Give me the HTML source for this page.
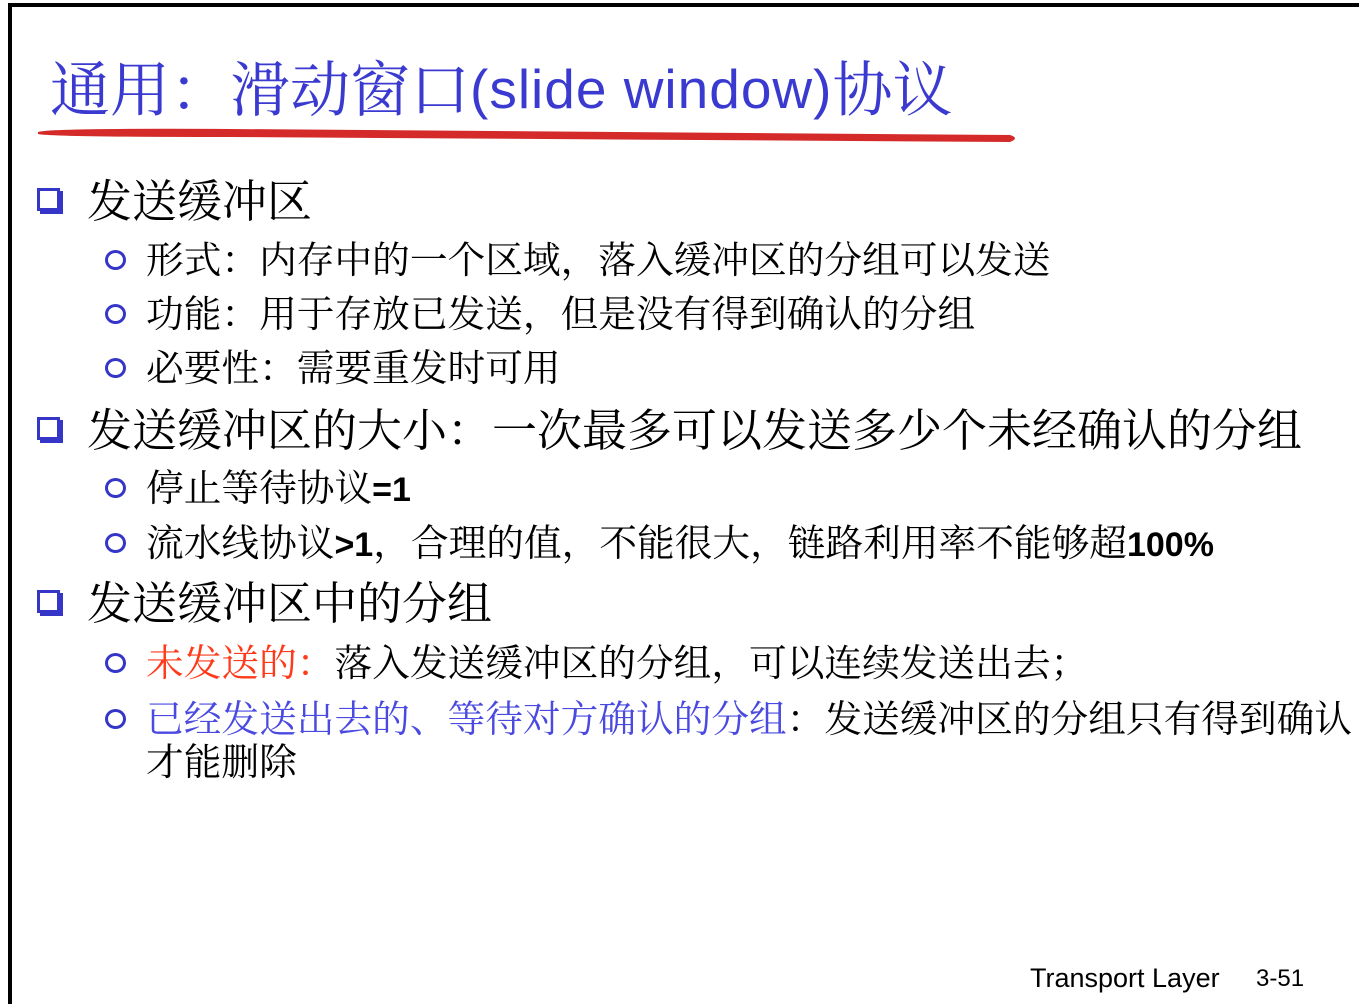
<!DOCTYPE html>
<html><head><meta charset="utf-8"><style>
html,body{margin:0;padding:0;background:#fff;}
body{width:1359px;height:1004px;position:relative;overflow:hidden;font-family:"Noto Serif CJK SC",serif;}
.bt{position:absolute;left:8px;top:3px;width:1351px;height:4px;background:#000;}
.bl{position:absolute;left:8px;top:3px;width:4px;height:1001px;background:#000;}
.t{position:absolute;white-space:nowrap;line-height:1;}
.cjk{font-family:"Noto Serif CJK SC",serif;}
.l1{font-size:45px;left:87px;}
.l2{font-size:37.7px;left:146px;}
.sq{position:absolute;left:37px;width:23px;height:23px;border:3px solid #3535c8;box-sizing:border-box;box-shadow:3px 3px 0 #3535c8;}
.ci{position:absolute;left:105px;width:21px;height:20px;border:3.5px solid #3535c8;border-radius:50%;box-sizing:border-box;}
.lat{font-family:"Liberation Sans",sans-serif;}
</style></head><body>
<div class="bt"></div><div class="bl"></div>
<div class="t cjk" style="left:50px;top:56px;font-size:60px;color:#3a3ad0;">通用：滑动窗口<span class="lat" style="font-size:55px;letter-spacing:1px;position:relative;top:-3px;">(slide window)</span>协议</div>
<svg style="position:absolute;left:30px;top:120px" width="990" height="30"><path d="M8 12 Q20 8 200 9 L980 15 Q990 18 980 22 L200 17 Q20 17 8 14Z" fill="#d42a2a"/></svg>

<div class="sq" style="top:188px"></div>
<div class="t cjk l1" style="top:175px">发送缓冲区</div>
<div class="ci" style="top:250px"></div>
<div class="t cjk l2" style="top:239px">形式：内存中的一个区域，落入缓冲区的分组可以发送</div>
<div class="ci" style="top:304px"></div>
<div class="t cjk l2" style="top:293px">功能：用于存放已发送，但是没有得到确认的分组</div>
<div class="ci" style="top:358px"></div>
<div class="t cjk l2" style="top:347px">必要性：需要重发时可用</div>

<div class="sq" style="top:417px"></div>
<div class="t cjk l1" style="top:404px">发送缓冲区的大小：一次最多可以发送多少个未经确认的分组</div>
<div class="ci" style="top:478px"></div>
<div class="t cjk l2" style="top:467px">停止等待协议<span class="lat" style="font-weight:bold;font-size:34px">=1</span></div>
<div class="ci" style="top:533px"></div>
<div class="t cjk l2" style="top:522px">流水线协议<span class="lat" style="font-weight:bold;font-size:34px">&gt;1</span>，合理的值，不能很大，链路利用率不能够超<span class="lat" style="font-weight:bold;font-size:34px">100%</span></div>

<div class="sq" style="top:590px"></div>
<div class="t cjk l1" style="top:577px">发送缓冲区中的分组</div>
<div class="ci" style="top:653px"></div>
<div class="t cjk l2" style="top:642px"><span style="color:#ff3a1a">未发送的：</span>落入发送缓冲区的分组，可以连续发送出去；</div>
<div class="ci" style="top:709px"></div>
<div class="t cjk l2" style="top:698px"><span style="color:#4a4ae0">已经发送出去的、等待对方确认的分组</span>：发送缓冲区的分组只有得到确认</div>
<div class="t cjk l2" style="top:741px">才能删除</div>

<div class="t lat" style="left:1030px;top:965px;font-size:27px;">Transport Layer</div>
<div class="t lat" style="left:1256px;top:967px;font-size:24px;">3-51</div>
</body></html>
